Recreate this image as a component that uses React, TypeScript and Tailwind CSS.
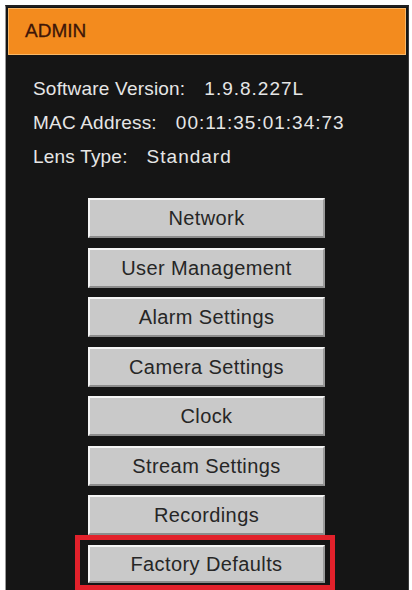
import React from "react";

const MENU = [
  "Network",
  "User Management",
  "Alarm Settings",
  "Camera Settings",
  "Clock",
  "Stream Settings",
  "Recordings",
];

const INFO: [string, string][] = [
  ["Software Version:", "1.9.8.227L"],
  ["MAC Address:", "00:11:35:01:34:73"],
  ["Lens Type:", "Standard"],
];

const MenuButton: React.FC<{ label: string; className?: string }> = ({
  label,
  className = "",
}) => (
  <button
    className={`flex items-center justify-center w-[237px] bg-[#c9c9c9] border-2 border-t-[#f4f4f4] border-l-[#f4f4f4] border-b-[#8c8c8c] border-r-[#9a9a9a] text-[20px] tracking-[0.4px] text-[#262626] leading-none ${className}`}
  >
    {label}
  </button>
);

export default function App() {
  return (
    <div
      className="w-[412px] h-[590px] bg-white pt-[5px] overflow-hidden"
      style={{ fontFamily: '"Liberation Sans", Arial, sans-serif' }}
    >
      <div className="ml-[5px] w-[404px] h-[600px] bg-[#151515] border-l border-l-[#9a9a9a] border-r border-r-[#3a3a3a] border-t-2 border-t-[#202020] pt-[1px] px-[2px]">
        {/* Header bar */}
        <div className="h-[47px] bg-[#f38b1e] border border-[#f9b868] flex items-center pl-[16px]">
          <span className="text-[19px] text-[#3e1608] [-webkit-text-stroke:0.3px_#3e1608]">
            ADMIN
          </span>
        </div>

        {/* Device info */}
        <div className="mt-[17px] pl-[25px] text-[#e6e6e6] text-[19px]">
          {INFO.map(([label, value]) => (
            <div key={label} className="h-[34px] flex items-center">
              <span className="tracking-[0.2px]">{label}</span>
              <span className="ml-[19px] tracking-[1px]">{value}</span>
            </div>
          ))}
        </div>

        {/* Admin menu */}
        <div className="mt-[24px] ml-[67px] w-[260px] flex flex-col">
          <div className="flex flex-col gap-[9.5px]">
            {MENU.map((m) => (
              <MenuButton key={m} label={m} className="h-[40px] ml-[13px]" />
            ))}
          </div>
          <div className="border-[5px] border-[#e2212b] pt-[5px] pl-[8px] pr-[5px] pb-[2px]">
            <MenuButton label="Factory Defaults" className="h-[38px]" />
          </div>
        </div>
      </div>
    </div>
  );
}
